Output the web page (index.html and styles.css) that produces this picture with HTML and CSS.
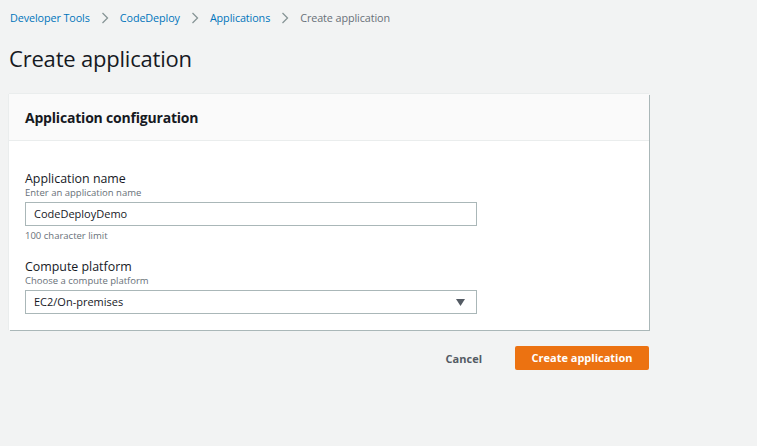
FILE: index.html
```html
<!DOCTYPE html>
<html>
<head>
<meta charset="utf-8">
<link rel="stylesheet" href="styles.css">
</head>
<body>
<nav class="crumbs">
  <a class="crumb">Developer Tools</a>
  <svg class="sep" width="8" height="12" viewBox="0 0 8 12"><path d="M1.5 1 L6.5 6 L1.5 11" fill="none" stroke="#879596" stroke-width="1.3"/></svg>
  <a class="crumb">CodeDeploy</a>
  <svg class="sep" width="8" height="12" viewBox="0 0 8 12"><path d="M1.5 1 L6.5 6 L1.5 11" fill="none" stroke="#879596" stroke-width="1.3"/></svg>
  <a class="crumb">Applications</a>
  <svg class="sep" width="8" height="12" viewBox="0 0 8 12"><path d="M1.5 1 L6.5 6 L1.5 11" fill="none" stroke="#879596" stroke-width="1.3"/></svg>
  <span class="current">Create application</span>
</nav>
<h1 class="title">Create application</h1>
<section class="card">
  <div class="card-head">Application configuration</div>
  <div class="card-body">
    <div class="field">
      <div class="label">Application name</div>
      <div class="desc">Enter an application name</div>
      <div class="input">CodeDeployDemo</div>
      <div class="hint">100 character limit</div>
    </div>
    <div class="field">
      <div class="label">Compute platform</div>
      <div class="desc">Choose a compute platform</div>
      <div class="input select">
        <span>EC2/On-premises</span>
        <svg width="9" height="7" viewBox="0 0 9 7"><path d="M0 0 H9 L4.5 7 Z" fill="#545b64"/></svg>
      </div>
    </div>
  </div>
</section>
<div class="actions">
  <span class="cancel">Cancel</span>
  <span class="primary">Create application</span>
</div>
</body>
</html>
```
FILE: styles.css
```css
html, body {
  margin: 0;
  padding: 0;
  background: #f2f3f3;
  font-family: "Open Sans", "Noto Sans", sans-serif;
  color: #16191f;
}
body {
  width: 757px;
  height: 446px;
  overflow: hidden;
}
.crumbs {
  display: flex;
  align-items: center;
  gap: 9px;
  padding: 9px 10px 0 10px;
  height: 17px;
  font-size: 10.8px;
  letter-spacing: -0.1px;
}
.crumb { color: #0073bb; }
.sep { margin: 0 2px; }
.current { color: #687078; }
.title {
  margin: 0;
  padding: 17px 0 0 9px;
  font-size: 22px;
  font-weight: 400;
  line-height: 30px;
  letter-spacing: -0.2px;
  color: #16191f;
}
.card {
  margin: 21px 0 0 9px;
  width: 640px;
  background: #fff;
  box-shadow: 1px 1px 0 0 #aab7b8, -1px 0 0 0 #eaeded, 0 -1px 0 0 #eaeded;
}
.card-head {
  height: 46px;
  line-height: 47px;
  padding: 0 16px;
  background: #fafafa;
  border-bottom: 1px solid #eaeded;
  font-size: 14px;
  font-weight: 700;
  letter-spacing: -0.2px;
}
.card-body {
  padding: 30px 16px 16px 16px;
  display: flex;
  flex-direction: column;
  gap: 17px;
}
.label {
  font-size: 12.4px;
  line-height: 16px;
  color: #16191f;
}
.desc {
  font-size: 9.5px;
  line-height: 12px;
  color: #687078;
  margin-bottom: 3px;
}
.input {
  height: 22px;
  border: 1px solid #aab7b8;
  background: #fff;
  font-size: 11px;
  line-height: 22px;
  padding: 0 8px;
  box-sizing: content-box;
  width: 434px;
}
.hint {
  font-size: 9.5px;
  line-height: 12px;
  color: #687078;
  margin-top: 4px;
}
.select {
  display: flex;
  align-items: center;
  justify-content: space-between;
  padding: 0 11px 0 8px;
  width: 431px;
}
.actions {
  display: flex;
  justify-content: flex-end;
  align-items: center;
  gap: 33px;
  width: 649px;
  margin-top: 16px;
}
.cancel {
  font-size: 11px;
  font-weight: 700;
  color: #545b64;
}
.primary {
  background: #ec7211;
  color: #fff;
  font-size: 11px;
  font-weight: 700;
  width: 134px;
  height: 24px;
  line-height: 24px;
  text-align: center;
  border-radius: 2px;
}
```
